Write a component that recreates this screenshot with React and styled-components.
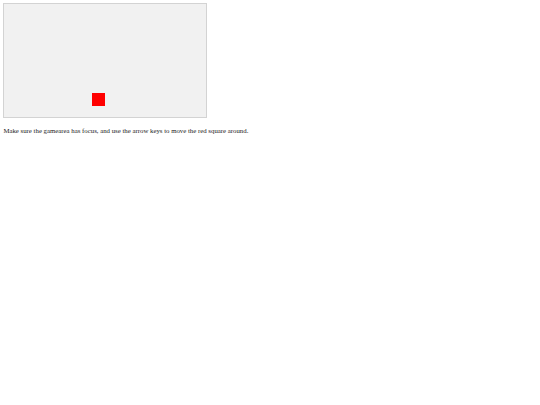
import React from "react";
import styled, { createGlobalStyle } from "styled-components";

const GlobalStyle = createGlobalStyle`
    body {
        margin: 3.4px;
        background: #ffffff;
        font-family: "Liberation Serif", "Times New Roman", serif;
        font-size: 6.8px;
        color: #1a1a1a;
    }
`;

const GameArea = styled.div`
    position: relative;
    width: 202px;
    height: 113px;
    border: 1px solid #d3d3d3;
    background: #f1f1f1;
    outline: none;
`;

const Piece = styled.div`
    position: absolute;
    width: 13px;
    height: 13px;
    background: ${(p) => p.color};
`;

const Hint = styled.p`
    margin: 8.6px 0 6.8px;
    line-height: 1.15;
`;

function App() {
    const [pos, setPos] = React.useState({ x: 87.6, y: 88.2 });

    const onKey = (e) => {
        const step = 1;
        const moves = {
            ArrowLeft: [-step, 0],
            ArrowRight: [step, 0],
            ArrowUp: [0, -step],
            ArrowDown: [0, step],
        };
        const m = moves[e.key];
        if (!m) return;
        e.preventDefault();
        setPos((p) => ({ x: p.x + m[0], y: p.y + m[1] }));
    };

    return (
        <>
            <GlobalStyle />
            <GameArea tabIndex={0} onKeyDown={onKey}>
                <Piece color="#ff0000" style={{ left: pos.x, top: pos.y }} />
            </GameArea>
            <Hint>
                Make sure the gamearea has focus, and use the arrow keys to move the red square around.
            </Hint>
        </>
    );
}

export default App;
